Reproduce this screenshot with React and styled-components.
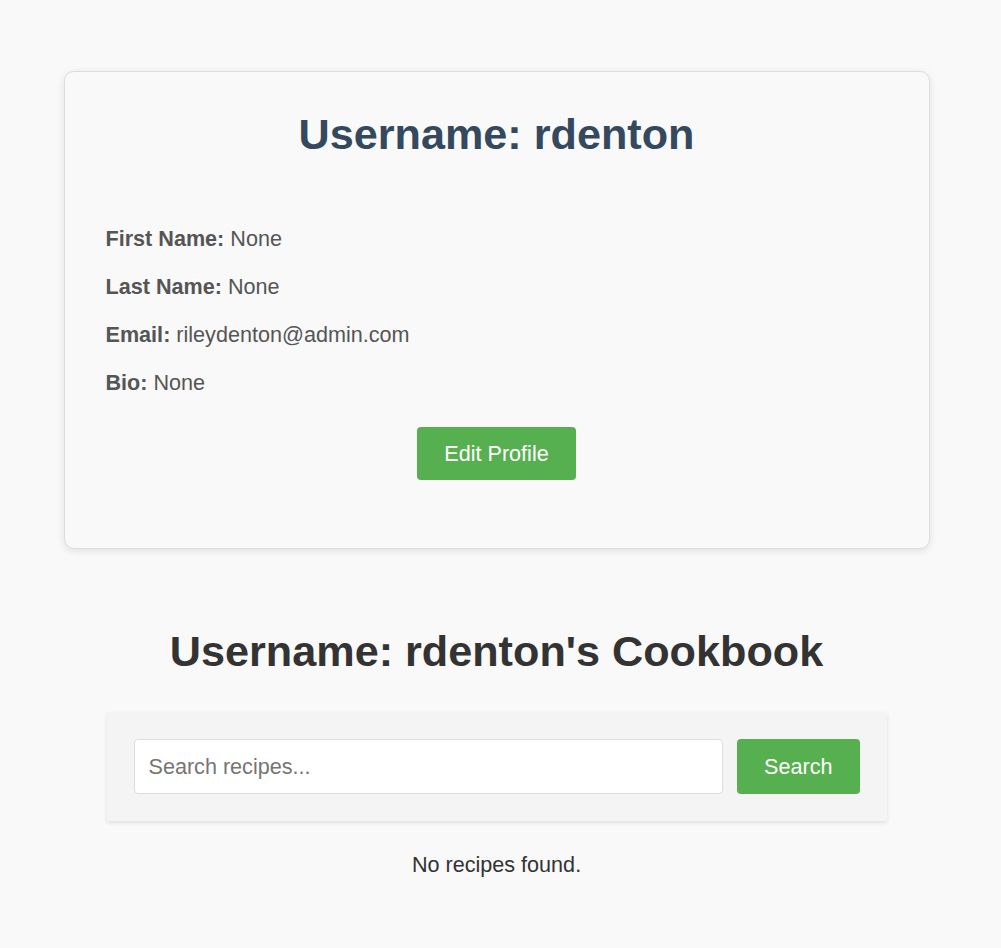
import React from "react";
import styled, { createGlobalStyle } from "styled-components";

const Global = createGlobalStyle`
  html, body { margin: 0; padding: 0; background: #f9f9f9; }
  body { font-family: "Liberation Sans", Arial, sans-serif; color: #333; }
`;

const Page = styled.div`
  width: 993px;
  padding-top: 71px;
  padding-bottom: 60px;
  display: flex;
  flex-direction: column;
  align-items: center;
`;

const Card = styled.section`
  box-sizing: border-box;
  width: 866px;
  background: #f9f9f9;
  border: 1px solid #dddddd;
  border-radius: 10px;
  box-shadow: 0 2px 8px rgba(0, 0, 0, 0.1);
  padding: 38px 41px 68px;
  display: flex;
  flex-direction: column;
`;

const Title = styled.h1`
  margin: 0 0 68px;
  text-align: center;
  font-size: 43.2px;
  line-height: 48px;
  font-weight: 700;
  color: #34495e;
`;

const InfoRow = styled.p`
  margin: 0 0 23px;
  font-size: 21.6px;
  line-height: 25px;
  color: #555;
  strong { font-weight: 700; }
`;

const GreenButton = styled.button`
  font-family: "Liberation Sans", Arial, sans-serif;
  font-size: 21.6px;
  color: #fff;
  background: #57b04f;
  border: none;
  border-radius: 4px;
  height: ${(p) => p.$h}px;
  padding: 0 ${(p) => p.$px}px;
  cursor: pointer;
`;

const EditButton = styled(GreenButton)`
  align-self: center;
  margin-top: 9px;
`;

const Cookbook = styled.h2`
  margin: 78px 0 37px;
  font-size: 43.2px;
  line-height: 48px;
  font-weight: 700;
  color: #333;
  text-align: center;
`;

const SearchPanel = styled.div`
  box-sizing: border-box;
  width: 780px;
  height: 109px;
  background: #f4f4f4;
  box-shadow: 0 2px 4px rgba(0, 0, 0, 0.1);
  padding: 27px 27px;
  display: flex;
  gap: 14px;
`;

const SearchInput = styled.input`
  box-sizing: border-box;
  flex: 1;
  height: 55px;
  border: 1px solid #dddddd;
  border-radius: 4px;
  background: #fff;
  padding: 0 14px;
  font-family: "Liberation Sans", Arial, sans-serif;
  font-size: 21.6px;
  color: #333;
  &::placeholder { color: #757575; }
  outline: none;
`;

const Empty = styled.p`
  margin: 31px 0 0;
  font-size: 21.6px;
  line-height: 25px;
  color: #333;
  text-align: center;
`;

const fields = [
  ["First Name", "None"],
  ["Last Name", "None"],
  ["Email", "rileydenton@admin.com"],
  ["Bio", "None"],
];

export default function App() {
  return (
    <>
      <Global />
      <Page>
        <Card>
          <Title>Username: rdenton</Title>
          {fields.map(([k, v]) => (
            <InfoRow key={k}>
              <strong>{k}:</strong> {v}
            </InfoRow>
          ))}
          <EditButton $h={53} $px={27}>Edit Profile</EditButton>
        </Card>
        <Cookbook>Username: rdenton's Cookbook</Cookbook>
        <SearchPanel>
          <SearchInput placeholder="Search recipes..." />
          <GreenButton $h={55} $px={27}>Search</GreenButton>
        </SearchPanel>
        <Empty>No recipes found.</Empty>
      </Page>
    </>
  );
}
